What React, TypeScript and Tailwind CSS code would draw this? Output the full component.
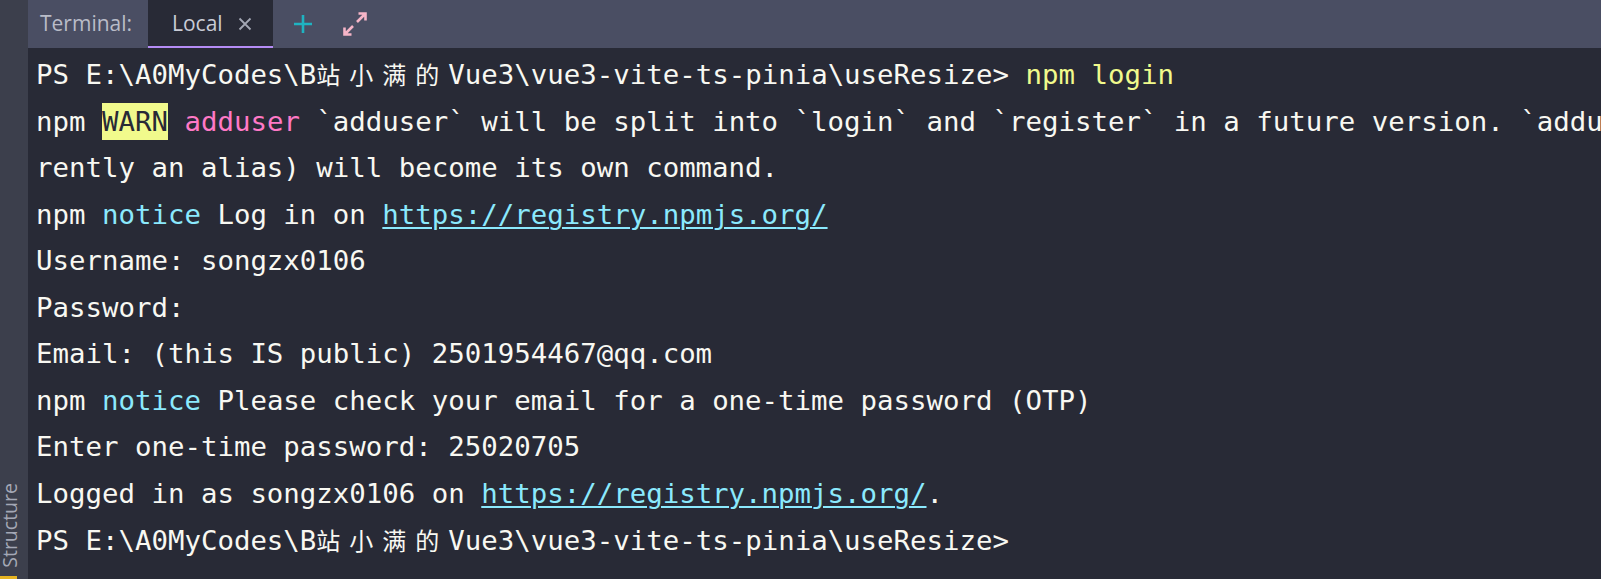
import React from "react";

const MONO = "font-['DejaVu_Sans_Mono','Liberation_Mono',monospace]";

function Cjk({ c }: { c: string }) {
  return (
    <span className="inline-block w-[33px] font-['Noto_Sans_CJK_SC',sans-serif] text-[24px] align-baseline">
      {c}
    </span>
  );
}

function Prompt({ children }: { children?: React.ReactNode }) {
  return (
    <div>
      {"PS E:\\A0MyCodes\\B"}
      <Cjk c="站" />
      <Cjk c="小" />
      <Cjk c="满" />
      <Cjk c="的" />
      {"Vue3\\vue3-vite-ts-pinia\\useResize>"}
      {children}
    </div>
  );
}

function Link({ children }: { children: React.ReactNode }) {
  return (
    <span className="text-[#8be9fd] underline decoration-[1.5px] underline-offset-[3px]">{children}</span>
  );
}

export default function App() {
  return (
    <div className="flex h-[579px] w-[1601px] overflow-hidden bg-[#282a36]">
      {/* left tool strip */}
      <div className="flex w-[28px] shrink-0 flex-col items-start justify-end bg-[#3c3f4c]">
        <div className="mb-[8px] rotate-180 font-['Open_Sans',sans-serif] text-[19.5px] leading-[19px] text-[#a4a8b6] [writing-mode:vertical-rl]">
          Structure
        </div>
        <div className="h-[3px] w-[17px] bg-[#e6b422]" />
      </div>

      <div className="flex min-w-0 flex-1 flex-col">
        {/* tab bar */}
        <div className="flex h-[48px] shrink-0 items-stretch bg-[#4a4e63] font-['Open_Sans',sans-serif] text-[21px]">
          <div className="flex w-[120px] items-center pl-[12px] text-[#b9bcc8]">Terminal:</div>
          <div className="relative flex w-[125px] items-center bg-[#282a36] pl-[24px] text-[#c9ccd6]">
            <span>Local</span>
            <svg className="ml-[15px]" width="14" height="14" viewBox="0 0 14 14">
              <path d="M1.5 1.5 L12.5 12.5 M12.5 1.5 L1.5 12.5" stroke="#a3a7b4" strokeWidth="1.8" />
            </svg>
            <div className="absolute bottom-0 left-0 h-[2px] w-full bg-[#b58cf5]" />
          </div>
          <div className="flex items-center pl-[21px]">
            <svg width="18" height="18" viewBox="0 0 18 18">
              <path d="M9 0 V18 M0 9 H18" stroke="#1fb3c1" strokeWidth="2.6" />
            </svg>
          </div>
          <div className="flex items-center pl-[30px] pb-[1px]">
            <svg width="26" height="24" viewBox="0 0 26 24">
              <path
                d="M15 10 L23.5 1.5 M16.5 1.5 H23.5 V8.5 M11 14 L2.5 22.5 M2.5 15.5 V22.5 H9.5"
                stroke="#f6b5c8"
                strokeWidth="2.6"
                fill="none"
              />
            </svg>
          </div>
        </div>

        {/* terminal */}
        <div
          className={`min-w-0 flex-1 overflow-hidden whitespace-pre bg-[#282a36] pl-[8px] pt-[3px] ${MONO} text-[27.4px] leading-[46.5px] text-[#f8f8f2]`}
        >
          <Prompt>
            {" "}
            <span className="text-[#f1fa8c]">npm login</span>
          </Prompt>
          <div>
            {"npm "}
            <span className="inline-block bg-[#f1fa8c] leading-[37px] text-[#282a36]">WARN</span>{" "}
            <span className="text-[#ff79c6]">adduser</span>
            {" `adduser` will be split into `login` and `register` in a future version. `adduser` (cur"}
          </div>
          <div>rently an alias) will become its own command.</div>
          <div>
            {"npm "}
            <span className="text-[#8be9fd]">notice</span>
            {" Log in on "}
            <Link>https://registry.npmjs.org/</Link>
          </div>
          <div>Username: songzx0106</div>
          <div>Password:</div>
          <div>Email: (this IS public) 2501954467@qq.com</div>
          <div>
            {"npm "}
            <span className="text-[#8be9fd]">notice</span>
            {" Please check your email for a one-time password (OTP)"}
          </div>
          <div>Enter one-time password: 25020705</div>
          <div>
            {"Logged in as songzx0106 on "}
            <Link>https://registry.npmjs.org/</Link>.
          </div>
          <Prompt />
        </div>
      </div>
    </div>
  );
}
